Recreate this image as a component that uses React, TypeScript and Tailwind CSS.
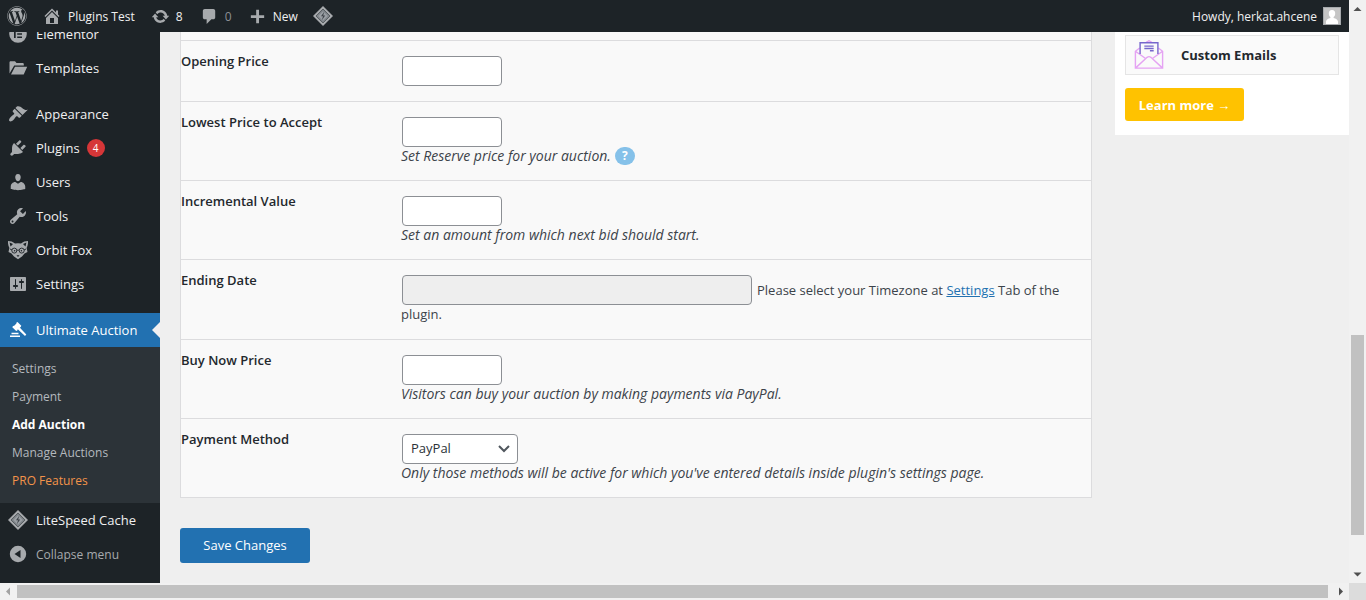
import React from 'react';
import { FaWordpress } from 'react-icons/fa';

const PATHS = {
  home: 'M16 8.5l1.53 1.53-1.06 1.06L10 4.6l-6.47 6.49-1.06-1.06L10 2.5l4 4v-2h2v4zm-6-2.46l6 5.99V18H4v-5.97zM12 17v-5H8v5h4z',
  update:
    'M10.2 3.28c3.53 0 6.43 2.61 6.92 6h2.08l-3.5 4-3.5-4h2.32c-.45-1.97-2.21-3.45-4.32-3.45-1.45 0-2.73.71-3.54 1.78L4.95 5.66C6.23 4.2 8.11 3.28 10.2 3.28zm-.4 13.44c-3.52 0-6.43-2.61-6.92-6H.8l3.5-4c1.17 1.33 2.33 2.67 3.5 4H5.48c.45 1.97 2.21 3.45 4.32 3.45 1.45 0 2.73-.71 3.54-1.78l1.71 1.95c-1.28 1.46-3.15 2.38-5.25 2.38z',
  comment: 'M5 2h9c1.1 0 2 .9 2 2v7c0 1.1-.9 2-2 2h-2l-5 5v-5H5c-1.1 0-2-.9-2-2V4c0-1.1.9-2 2-2z',
  plus: 'M17 8.7v2.8h-5.4V17H8.6v-5.500H3V8.7h5.600V3h3v5.700z',
  templates:
    'M1.500 15.500V4.500c0-.8.500-1.300 1.300-1.300h4.200l1.500 1.800h6c.800 0 1.300.5 1.300 1.300V7.500H6.200zM3 16.500L7 8.700h12.200l-3.500 7.800z',
  appearance:
    'M14.48 11.06L7.41 3.99l1.5-1.5c.5-.56 2.3-.47 3.51.32 1.21.8 1.43 1.28 2.91 2.1 1.18.64 2.45 1.26 4.45.85zm-.71.71L6.7 4.7 4.93 6.47c-.39.39-.39 1.02 0 1.41l1.06 1.06c.39.39.39 1.03 0 1.42-.6.6-1.43 1.11-2.21 1.69-.35.26-.7.53-1.01.84C1.43 14.23.4 16.08 1.4 17.07c.99 1 2.84-.03 4.18-1.36.31-.31.58-.66.85-1.02.57-.78 1.08-1.61 1.69-2.21.39-.39 1.02-.39 1.41 0l1.06 1.06c.39.39 1.02.39 1.41 0z',
  plugins:
    'M13.11 4.36L9.87 7.6 8 5.73l3.24-3.24c.35-.34 1.05-.2 1.56.32.52.51.66 1.21.31 1.55zm-8 1.77l.91-1.12 9.01 9.01-1.19.84c-.71.71-2.63 1.16-3.82 1.16H6.14L4.9 17.26c-.59.59-1.54.59-2.12 0-.59-.58-.59-1.53 0-2.12l1.24-1.24v-3.88c0-1.13.4-3.19 1.09-3.89zm7.26 3.97l3.24-3.24c.34-.35 1.04-.21 1.55.31.52.51.66 1.21.31 1.55l-3.24 3.25z',
  users:
    'M10 9.25c-2.27 0-2.73-3.44-2.73-3.44C7 4.02 7.82 2 9.97 2c2.16 0 2.98 2.02 2.71 3.81 0 0-.41 3.44-2.68 3.44zm0 2.57L12.72 10c2.39 0 4.52 2.33 4.52 4.53v2.49s-3.65 1.13-7.24 1.13c-3.65 0-7.24-1.13-7.24-1.13v-2.49c0-2.25 1.94-4.48 4.47-4.48z',
  tools:
    'M16.68 9.77c-1.34 1.34-3.3 1.67-4.95.99l-5.41 6.52c-.99.99-2.59.99-3.58 0s-.99-2.59 0-3.57l6.52-5.42c-.68-1.65-.35-3.61.99-4.95 1.28-1.28 3.12-1.62 4.72-1.06l-2.89 2.89 2.82 2.82 2.86-2.87c.53 1.58.18 3.39-1.08 4.65zM3.81 16.21c.4.39 1.04.39 1.43 0 .4-.4.4-1.04 0-1.43-.39-.4-1.03-.4-1.43 0-.39.39-.39 1.03 0 1.43z',
  settings:
    'M18 16V4c0-.55-.45-1-1-1H3c-.55 0-1 .45-1 1v12c0 .55.45 1 1 1h14c.55 0 1-.45 1-1zM8 11h1c.55 0 1 .45 1 1s-.45 1-1 1H8v1.5c0 .28-.22.5-.5.5s-.5-.22-.5-.5V13H6c-.55 0-1-.45-1-1s.45-1 1-1h1V5.5c0-.28.22-.5.5-.5s.5.22.5.5V11zm5-2h-1c-.55 0-1-.45-1-1s.45-1 1-1h1V5.5c0-.28.22-.5.5-.5s.5.22.5.5V7h1c.55 0 1 .45 1 1s-.45 1-1 1h-1v5.5c0 .28-.22.5-.5.5s-.5-.22-.5-.5V9z',
  collapse:
    'M10 1.800a8.200 8.200 0 1 0 0 16.400a8.200 8.200 0 1 0 0-16.400zM12.500 6v8L6.500 10z',
  elementor:
    'M10 1.200a8.800 8.800 0 1 0 0 17.600a8.800 8.800 0 1 0 0-17.600zM6 6h1.700v8H6zM9.200 6H14v1.600H9.200zM9.200 9.200H14v1.600H9.200zM9.200 12.400H14V14H9.200z',
  gavel:
    'M9.500 2L13.300 5.800L12.600 7.200L11.700 7.400L18.300 14.600L17 16L9.800 9.300L9.300 10.500L8.200 11L4.300 7.200L5 6L6.200 5.800L8.400 3.500L8.500 2.500ZM3.500 12.800h7v1.400h-7zM2 15.500h10v1.500H2z',
};

type IconName = keyof typeof PATHS;

function Icon({ name, className = 'size-5' }: { name: IconName; className?: string }) {
  return (
    <svg viewBox="0 0 20 20" className={`shrink-0 ${className}`} fill="currentColor" aria-hidden="true">
      <path fillRule="evenodd" d={PATHS[name]} />
    </svg>
  );
}

function LiteSpeedIcon() {
  return (
    <svg viewBox="0 0 20 20" className="size-5 shrink-0" aria-hidden="true">
      <path d="M10 0L20 10L10 20L0 10Z" fill="currentColor" />
      <path d="M10 3L17 10L10 17L3 10Z" fill="#7d8388" stroke="#4a5056" strokeWidth="0.800" />
      <path d="M10 5.200L14.800 10L10 14.800L5.200 10Z" fill="#9a9fa4" />
      <path d="M11.200 5.800L8 10.300H10L8.900 14.200L12.200 9.500H10.200Z" fill="#3f454b" />
    </svg>
  );
}

function FoxIcon() {
  return (
    <svg viewBox="0 0 20 20" className="size-5 shrink-0" aria-hidden="true">
      <path
        fill="currentColor"
        d="M0 1C2.600 1 5 1.700 7 3.600Q10 2.800 13 3.600C15 1.700 17.400 1 20 1C20.200 4 19.600 6 18.600 8L19.500 12L16.500 13.500L14 16.500L10 19.200L6 16.500L3.500 13.500L.5 12L1.400 8C.4 6 -.2 4 0 1Z"
      />
      <path fill="#1d2327" d="M1.600 2.500L5 4L2.500 6.500ZM18.400 2.500L15 4L17.500 6.500Z" />
      <g fill="none" stroke="#1d2327" strokeWidth="0.900">
        <circle cx="6.300" cy="10.600" r="2.500" />
        <circle cx="13.700" cy="10.600" r="2.500" />
        <path d="M8.800 10.400Q10 9.500 11.200 10.400M2 9L4 10M18 9L16 10" />
      </g>
      <circle cx="6.600" cy="10.700" r=".8" fill="#1d2327" />
      <circle cx="13.400" cy="10.700" r=".8" fill="#1d2327" />
      <path fill="#1d2327" d="M8.500 15.200H11.500L10 17Z" />
    </svg>
  );
}

function EnvelopeIcon() {
  return (
    <svg viewBox="0 0 32 32" className="size-[30px] shrink-0" fill="none" strokeWidth="1.500" aria-hidden="true">
      <path stroke="#e5a3f3" d="M6 8.500L1.500 12V30H30.500V12L26 8.500M1.500 12L12 19.500M30.500 12L20 19.500M1.500 30L14 18.500Q16 17 18 18.500L30.500 30M13 2.500L16 .8L19 2.500" />
      <path stroke="#7767cc" d="M6.500 15V3H25.500V15M11 6.500H21M11 9H21M17 11.500H21" />
    </svg>
  );
}

function MenuItem({ icon, label, badge }: { icon: React.ReactNode; label: string; badge?: string }) {
  return (
    <li>
      <a href="#" className="flex h-[34px] items-center gap-2 pl-2 text-[#f0f0f1]">
        <span className="text-[#a7aaad]">{icon}</span>
        <span className="pt-0.5">{label}</span>
        {badge && (
          <span className="-ml-px flex size-[18px] items-center justify-center rounded-full bg-[#d63638] text-[10px] text-white">
            {badge}
          </span>
        )}
      </a>
    </li>
  );
}

function AdminBar() {
  return (
    <header className="flex h-8 shrink-0 items-center justify-between bg-[#1d2327] pr-2 pl-[7px] text-[12px] text-[#f0f0f1]">
      <nav className="flex items-center" aria-label="Toolbar">
        <a href="#" aria-label="About WordPress" className="text-[#a7aaad]">
          <FaWordpress className="size-5" />
        </a>
        <a href="#" className="ml-[15px] flex items-center gap-1.5">
          <Icon name="home" className="size-5 text-[#a7aaad]" />
          <span className="pt-0.5">Plugins Test</span>
        </a>
        <a href="#" className="ml-4 flex items-center gap-1.5" aria-label="8 updates available">
          <Icon name="update" className="size-[19px] text-[#a7aaad]" />
          <span className="w-2 pt-0.5">8</span>
        </a>
        <a href="#" className="ml-4 flex items-center gap-1.5 text-[#8c8f94]" aria-label="0 comments">
          <Icon name="comment" className="size-[19px] text-[#a7aaad]" />
          <span className="w-2 pt-0.5">0</span>
        </a>
        <a href="#" className="ml-[15px] flex items-center gap-1.5">
          <Icon name="plus" className="size-[19px] text-[#a7aaad]" />
          <span className="pt-0.5">New</span>
        </a>
        <a href="#" className="ml-[15px] text-[#a7aaad]" aria-label="LiteSpeed Cache">
          <LiteSpeedIcon />
        </a>
      </nav>
      <a href="#" className="flex items-center gap-1.5">
        <span className="pt-0.5">Howdy, herkat.ahcene</span>
        <svg viewBox="0 0 18 18" className="size-[18px]" aria-hidden="true">
          <rect width="18" height="18" fill="#a7aaad" />
          <rect x="1" y="1" width="16" height="16" fill="#c5c5c5" />
          <path fill="#fff" d="M9 3a3.300 3.300 0 0 1 3.200 3.400c0 1.600-.7 2.900-1.600 3.600v1c2.400.5 4 1.500 4.400 3.400V17H3v-2.600c.400-1.900 2-2.900 4.400-3.400v-1c-.9-.7-1.600-2-1.600-3.600A3.300 3.300 0 0 1 9 3z" />
        </svg>
      </a>
    </header>
  );
}

const SUBMENU = [
  { label: 'Settings', className: 'text-[#b4b9be]' },
  { label: 'Payment', className: 'text-[#b4b9be]' },
  { label: 'Add Auction', className: 'font-bold text-white' },
  { label: 'Manage Auctions', className: 'text-[#b4b9be]' },
  { label: 'PRO Features', className: 'text-[#f4934a]' },
];

function Sidebar() {
  return (
    <nav aria-label="Main menu" className="w-40 shrink-0 overflow-hidden bg-[#1d2327] text-[13px]">
      <ul className="-mt-[15px]">
        <MenuItem icon={<Icon name="elementor" />} label="Elementor" />
        <MenuItem icon={<Icon name="templates" />} label="Templates" />
        <li className="h-3" aria-hidden="true" />
        <MenuItem icon={<Icon name="appearance" />} label="Appearance" />
        <MenuItem icon={<Icon name="plugins" />} label="Plugins" badge="4" />
        <MenuItem icon={<Icon name="users" />} label="Users" />
        <MenuItem icon={<Icon name="tools" />} label="Tools" />
        <MenuItem icon={<FoxIcon />} label="Orbit Fox" />
        <MenuItem icon={<Icon name="settings" />} label="Settings" />
        <li className="h-3" aria-hidden="true" />
        <li>
          <a href="#" className="relative flex h-[34px] items-center gap-2 bg-[#2271b1] pl-2 text-white">
            <Icon name="gavel" />
            <span className="pt-0.5">Ultimate Auction</span>
            <svg viewBox="0 0 8 16" className="absolute top-[9px] right-0 h-4 w-2" aria-hidden="true">
              <path d="M8 0V16L0 8Z" fill="#f0f0f1" />
            </svg>
          </a>
          <ul className="bg-[#2c3338] py-2 text-[12px]">
            {SUBMENU.map((item) => (
              <li key={item.label}>
                <a href="#" className={`flex h-7 items-center pl-3 ${item.className}`}>
                  {item.label}
                </a>
              </li>
            ))}
          </ul>
        </li>
        <MenuItem icon={<LiteSpeedIcon />} label="LiteSpeed Cache" />
        <li>
          <button type="button" className="flex h-[34px] items-center gap-2 pl-2 text-[12px] text-[#a7aaad]">
            <Icon name="collapse" />
            <span className="pt-0.5">Collapse menu</span>
          </button>
        </li>
      </ul>
    </nav>
  );
}

const FIELD = 'mx-px h-[30px] rounded border border-[#8c8f94] px-2 align-top';

function Row({ id, label, children }: { id: string; label: string; children: React.ReactNode }) {
  return (
    <tr className="border-t border-[#dcdcde]">
      <th scope="row" className="w-[220px] pt-[11px] text-left align-top leading-[18px] font-semibold text-[#23282d]">
        <label htmlFor={id}>{label}</label>
      </th>
      <td className="pt-[15px] pr-2.5 pb-[15px] align-top text-[#3c434a]">{children}</td>
    </tr>
  );
}

function Note({ children }: { children: React.ReactNode }) {
  return <div className="flex h-[18px] items-center gap-1 text-[14px] leading-[18px] italic">{children}</div>;
}

function AuctionForm() {
  return (
    <form className="min-w-0 flex-1" onSubmit={(e) => e.preventDefault()}>
      <div className="border-x border-b border-[#dcdcde] bg-[#f9f9f9] pt-2">
        <table className="w-full border-collapse text-[13px]">
          <tbody>
            <Row id="opening" label="Opening Price">
              <input id="opening" type="text" className={`${FIELD} w-[100px] bg-white`} />
            </Row>
            <Row id="lowest" label="Lowest Price to Accept">
              <input id="lowest" type="text" className={`${FIELD} w-[100px] bg-white`} />
              <Note>
                Set Reserve price for your auction.
                <button
                  type="button"
                  aria-label="Help"
                  className="flex h-[18px] w-5 items-center justify-center rounded-full bg-[#85c1e9] text-[12px] font-bold text-white not-italic"
                >
                  ?
                </button>
              </Note>
            </Row>
            <Row id="increment" label="Incremental Value">
              <input id="increment" type="text" className={`${FIELD} w-[100px] bg-white`} />
              <Note>Set an amount from which next bid should start.</Note>
            </Row>
            <Row id="ending" label="Ending Date">
              <div className="mb-px leading-[18px]">
                <input id="ending" type="text" readOnly className={`${FIELD} w-[350px] bg-[#eeeeee]`} />
                <span className="ml-1 leading-[30px]">
                  Please select your Timezone at{' '}
                  <a href="#" className="text-[#2271b1] underline">
                    Settings
                  </a>{' '}
                  Tab of the
                </span>{' '}
                plugin.
              </div>
            </Row>
            <Row id="buynow" label="Buy Now Price">
              <input id="buynow" type="text" className={`${FIELD} w-[100px] bg-white`} />
              <Note>Visitors can buy your auction by making payments via PayPal.</Note>
            </Row>
            <Row id="method" label="Payment Method">
              <div className="relative w-[118px]">
                <select id="method" className={`${FIELD} w-[116px] appearance-none bg-white text-[#2c3338]`}>
                  <option>PayPal</option>
                </select>
                <svg viewBox="0 0 12 8" className="pointer-events-none absolute top-[11px] right-[9px] h-2 w-3" fill="none" aria-hidden="true">
                  <path d="M1 1L6 6L11 1" stroke="#50575e" strokeWidth="2" />
                </svg>
              </div>
              <Note>Only those methods will be active for which you've entered details inside plugin's settings page.</Note>
            </Row>
          </tbody>
        </table>
      </div>
      <button type="submit" className="mt-[30px] h-[35px] w-[130px] rounded-[3px] bg-[#2271b1] text-[13px] text-white">
        Save Changes
      </button>
    </form>
  );
}

function Promo() {
  return (
    <aside className="w-[234px] shrink-0 bg-white px-2.5 pt-[3px] pb-3.5 text-[13px] font-bold">
      <div className="flex h-10 items-center gap-[17px] border border-[#e5e5e5] bg-[#fafafa] pl-2 text-[#23282d]">
        <EnvelopeIcon />
        <span className="pt-0.5">Custom Emails</span>
      </div>
      <a href="#" className="mt-[13px] flex h-[33px] w-[119px] items-center justify-center rounded-[3px] bg-[#ffc200] text-white">
        <span className="pt-0.5">Learn more →</span>
      </a>
    </aside>
  );
}

function Arrow({ d, className = 'text-[#505050]' }: { d: string; className?: string }) {
  return (
    <svg viewBox="0 0 17 17" className={`size-[17px] shrink-0 ${className}`} aria-hidden="true">
      <path d={d} fill="currentColor" />
    </svg>
  );
}

export default function App() {
  return (
    <div className="flex h-screen flex-col overflow-hidden bg-[#efefef] font-['Open_Sans','Noto_Sans',sans-serif]">
      <div className="flex min-h-0 flex-1">
        <div className="flex min-w-0 flex-1 flex-col overflow-hidden">
          <AdminBar />
          <div className="flex min-h-0 flex-1">
            <Sidebar />
            <main className="flex min-w-0 flex-1 items-start gap-[23px] pl-5">
              <AuctionForm />
              <Promo />
            </main>
          </div>
        </div>
        <div className="flex w-[17px] shrink-0 flex-col items-center bg-[#f1f1f1]" aria-hidden="true">
          <Arrow d="M4.500 11L8.500 7L12.500 11Z" />
          <div className="min-h-0 w-[13px] grow-[318]" />
          <div className="h-[200px] w-[13px] shrink-0 bg-[#c1c1c1]" />
          <div className="min-h-0 w-[13px] grow-[31]" />
          <Arrow d="M4.500 6.500L8.500 10.500L12.500 6.500Z" />
        </div>
      </div>
      <div className="flex h-[17px] shrink-0 items-center bg-[#f1f1f1]" aria-hidden="true">
        <Arrow d="M10 4.500L6 8.500L10 12.500Z" className="text-[#a3a3a3]" />
        <div className="mr-1 h-[13px] flex-1 bg-[#c1c1c1]" />
        <Arrow d="M7 4.500L11 8.500L7 12.500Z" />
        <div className="size-[17px] shrink-0 bg-[#dcdcdc]" />
      </div>
    </div>
  );
}
